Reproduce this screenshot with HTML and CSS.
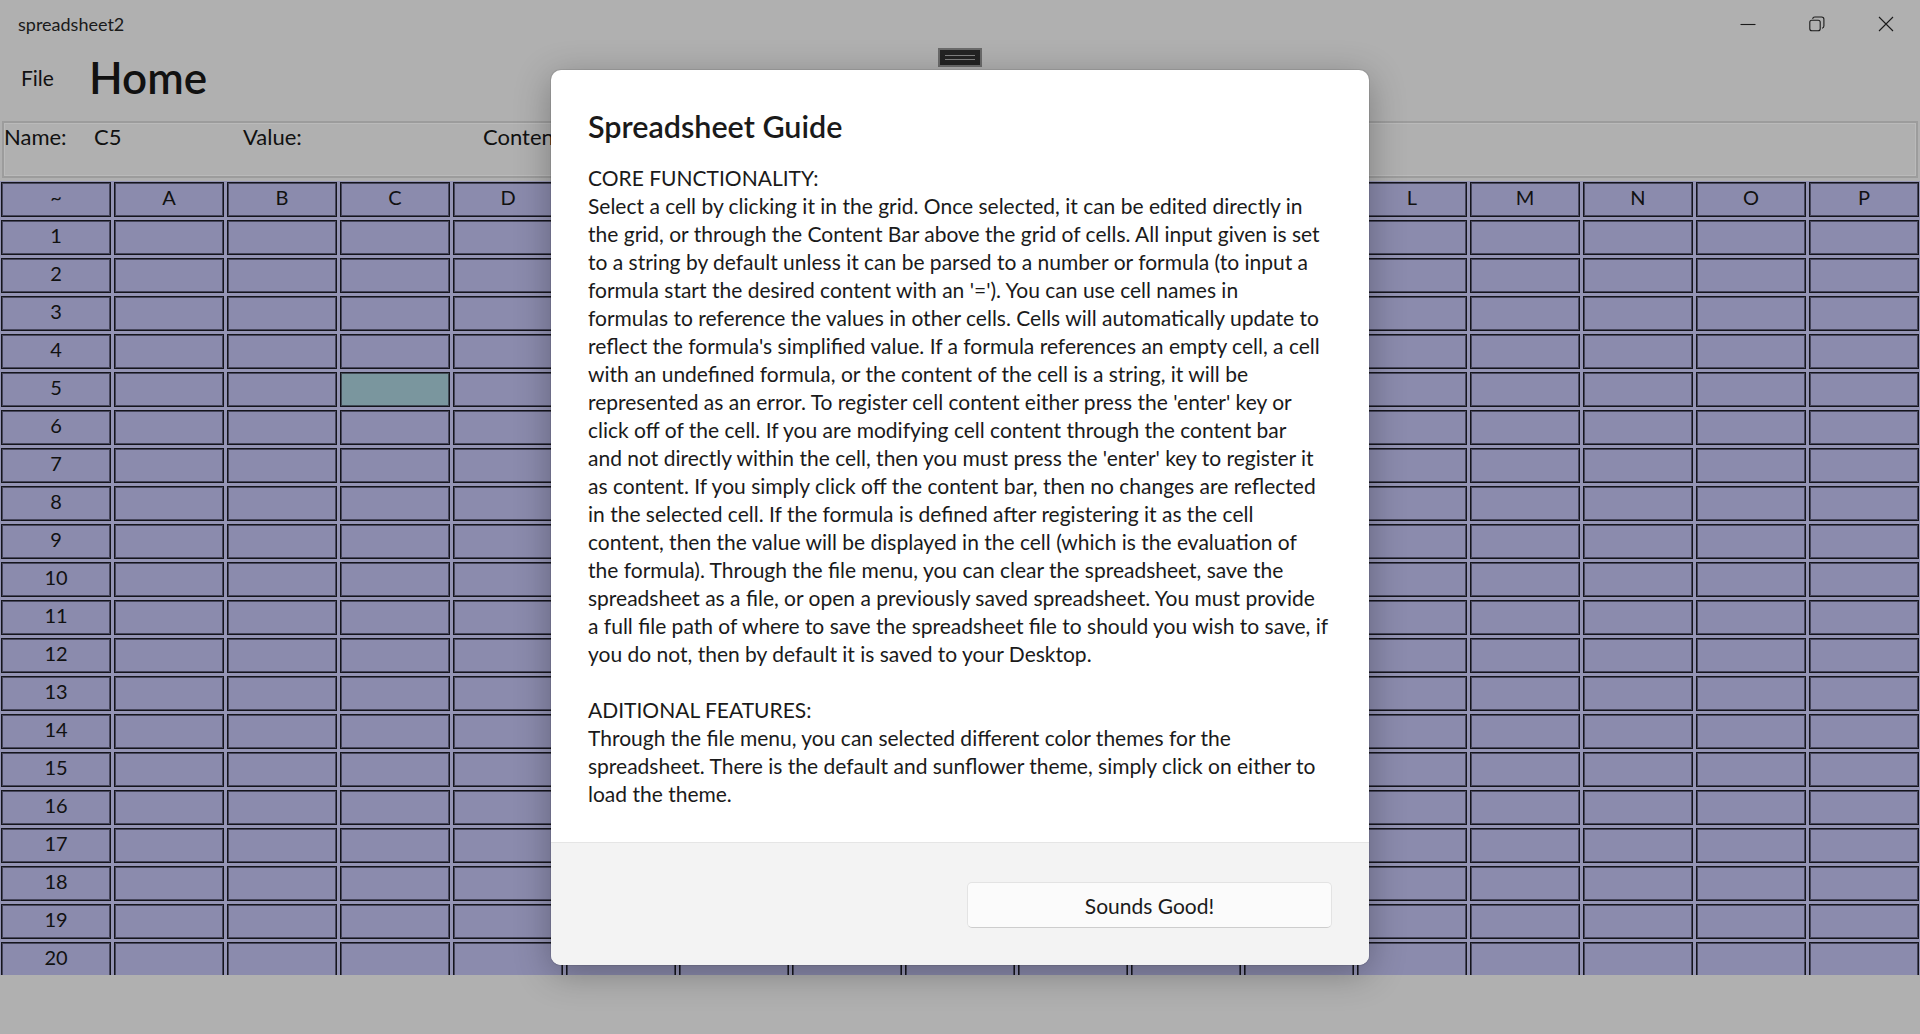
FILE: index.html
```html
<!DOCTYPE html>
<html lang="en">
<head>
<meta charset="utf-8">
<title>spreadsheet2</title>
<link rel="stylesheet" href="styles.css">
</head>
<body>
<header class="titlebar">
  <div class="app-title">spreadsheet2</div>
  <div class="caption">
    <div class="cap-btn"><svg width="16" height="16" viewBox="0 0 16 16"><path d="M0.5 8.5 H15.5" stroke="#1a1a1a" stroke-width="1.1" fill="none"/></svg></div>
    <div class="cap-btn"><svg width="16" height="16" viewBox="0 0 16 16" fill="none" stroke="#1a1a1a" stroke-width="1.1"><rect x="0.8" y="4.3" width="10.4" height="10.4" rx="2"/><path d="M3.6 2.8 A2.3 2.3 0 0 1 5.8 1 H12.6 A2.3 2.3 0 0 1 14.9 3.3 V10 A2.3 2.3 0 0 1 13 12.2"/></svg></div>
    <div class="cap-btn"><svg width="16" height="16" viewBox="0 0 16 16"><path d="M1 1 L15 15 M15 1 L1 15" stroke="#1a1a1a" stroke-width="1.1" fill="none"/></svg></div>
  </div>
</header>
<div class="grip"><span class="grip-lines"></span></div>
<nav class="menubar">
  <span class="menu-file">File</span>
  <h1 class="page-title">Home</h1>
</nav>
<section class="namebar">
  <span class="nb-name">Name:</span>
  <span class="nb-cell">C5</span>
  <span class="nb-value">Value:</span>
  <span class="nb-content">Content:</span>
</section>
<main class="grid">
  <div class="cell">~</div><div class="cell">A</div><div class="cell">B</div><div class="cell">C</div><div class="cell">D</div><div class="cell">E</div><div class="cell">F</div><div class="cell">G</div><div class="cell">H</div><div class="cell">I</div><div class="cell">J</div><div class="cell">K</div><div class="cell">L</div><div class="cell">M</div><div class="cell">N</div><div class="cell">O</div><div class="cell">P</div>
  <div class="cell">1</div><div class="cell"></div><div class="cell"></div><div class="cell"></div><div class="cell"></div><div class="cell"></div><div class="cell"></div><div class="cell"></div><div class="cell"></div><div class="cell"></div><div class="cell"></div><div class="cell"></div><div class="cell"></div><div class="cell"></div><div class="cell"></div><div class="cell"></div><div class="cell"></div>
  <div class="cell">2</div><div class="cell"></div><div class="cell"></div><div class="cell"></div><div class="cell"></div><div class="cell"></div><div class="cell"></div><div class="cell"></div><div class="cell"></div><div class="cell"></div><div class="cell"></div><div class="cell"></div><div class="cell"></div><div class="cell"></div><div class="cell"></div><div class="cell"></div><div class="cell"></div>
  <div class="cell">3</div><div class="cell"></div><div class="cell"></div><div class="cell"></div><div class="cell"></div><div class="cell"></div><div class="cell"></div><div class="cell"></div><div class="cell"></div><div class="cell"></div><div class="cell"></div><div class="cell"></div><div class="cell"></div><div class="cell"></div><div class="cell"></div><div class="cell"></div><div class="cell"></div>
  <div class="cell">4</div><div class="cell"></div><div class="cell"></div><div class="cell"></div><div class="cell"></div><div class="cell"></div><div class="cell"></div><div class="cell"></div><div class="cell"></div><div class="cell"></div><div class="cell"></div><div class="cell"></div><div class="cell"></div><div class="cell"></div><div class="cell"></div><div class="cell"></div><div class="cell"></div>
  <div class="cell">5</div><div class="cell"></div><div class="cell"></div><div class="cell sel"></div><div class="cell"></div><div class="cell"></div><div class="cell"></div><div class="cell"></div><div class="cell"></div><div class="cell"></div><div class="cell"></div><div class="cell"></div><div class="cell"></div><div class="cell"></div><div class="cell"></div><div class="cell"></div><div class="cell"></div>
  <div class="cell">6</div><div class="cell"></div><div class="cell"></div><div class="cell"></div><div class="cell"></div><div class="cell"></div><div class="cell"></div><div class="cell"></div><div class="cell"></div><div class="cell"></div><div class="cell"></div><div class="cell"></div><div class="cell"></div><div class="cell"></div><div class="cell"></div><div class="cell"></div><div class="cell"></div>
  <div class="cell">7</div><div class="cell"></div><div class="cell"></div><div class="cell"></div><div class="cell"></div><div class="cell"></div><div class="cell"></div><div class="cell"></div><div class="cell"></div><div class="cell"></div><div class="cell"></div><div class="cell"></div><div class="cell"></div><div class="cell"></div><div class="cell"></div><div class="cell"></div><div class="cell"></div>
  <div class="cell">8</div><div class="cell"></div><div class="cell"></div><div class="cell"></div><div class="cell"></div><div class="cell"></div><div class="cell"></div><div class="cell"></div><div class="cell"></div><div class="cell"></div><div class="cell"></div><div class="cell"></div><div class="cell"></div><div class="cell"></div><div class="cell"></div><div class="cell"></div><div class="cell"></div>
  <div class="cell">9</div><div class="cell"></div><div class="cell"></div><div class="cell"></div><div class="cell"></div><div class="cell"></div><div class="cell"></div><div class="cell"></div><div class="cell"></div><div class="cell"></div><div class="cell"></div><div class="cell"></div><div class="cell"></div><div class="cell"></div><div class="cell"></div><div class="cell"></div><div class="cell"></div>
  <div class="cell">10</div><div class="cell"></div><div class="cell"></div><div class="cell"></div><div class="cell"></div><div class="cell"></div><div class="cell"></div><div class="cell"></div><div class="cell"></div><div class="cell"></div><div class="cell"></div><div class="cell"></div><div class="cell"></div><div class="cell"></div><div class="cell"></div><div class="cell"></div><div class="cell"></div>
  <div class="cell">11</div><div class="cell"></div><div class="cell"></div><div class="cell"></div><div class="cell"></div><div class="cell"></div><div class="cell"></div><div class="cell"></div><div class="cell"></div><div class="cell"></div><div class="cell"></div><div class="cell"></div><div class="cell"></div><div class="cell"></div><div class="cell"></div><div class="cell"></div><div class="cell"></div>
  <div class="cell">12</div><div class="cell"></div><div class="cell"></div><div class="cell"></div><div class="cell"></div><div class="cell"></div><div class="cell"></div><div class="cell"></div><div class="cell"></div><div class="cell"></div><div class="cell"></div><div class="cell"></div><div class="cell"></div><div class="cell"></div><div class="cell"></div><div class="cell"></div><div class="cell"></div>
  <div class="cell">13</div><div class="cell"></div><div class="cell"></div><div class="cell"></div><div class="cell"></div><div class="cell"></div><div class="cell"></div><div class="cell"></div><div class="cell"></div><div class="cell"></div><div class="cell"></div><div class="cell"></div><div class="cell"></div><div class="cell"></div><div class="cell"></div><div class="cell"></div><div class="cell"></div>
  <div class="cell">14</div><div class="cell"></div><div class="cell"></div><div class="cell"></div><div class="cell"></div><div class="cell"></div><div class="cell"></div><div class="cell"></div><div class="cell"></div><div class="cell"></div><div class="cell"></div><div class="cell"></div><div class="cell"></div><div class="cell"></div><div class="cell"></div><div class="cell"></div><div class="cell"></div>
  <div class="cell">15</div><div class="cell"></div><div class="cell"></div><div class="cell"></div><div class="cell"></div><div class="cell"></div><div class="cell"></div><div class="cell"></div><div class="cell"></div><div class="cell"></div><div class="cell"></div><div class="cell"></div><div class="cell"></div><div class="cell"></div><div class="cell"></div><div class="cell"></div><div class="cell"></div>
  <div class="cell">16</div><div class="cell"></div><div class="cell"></div><div class="cell"></div><div class="cell"></div><div class="cell"></div><div class="cell"></div><div class="cell"></div><div class="cell"></div><div class="cell"></div><div class="cell"></div><div class="cell"></div><div class="cell"></div><div class="cell"></div><div class="cell"></div><div class="cell"></div><div class="cell"></div>
  <div class="cell">17</div><div class="cell"></div><div class="cell"></div><div class="cell"></div><div class="cell"></div><div class="cell"></div><div class="cell"></div><div class="cell"></div><div class="cell"></div><div class="cell"></div><div class="cell"></div><div class="cell"></div><div class="cell"></div><div class="cell"></div><div class="cell"></div><div class="cell"></div><div class="cell"></div>
  <div class="cell">18</div><div class="cell"></div><div class="cell"></div><div class="cell"></div><div class="cell"></div><div class="cell"></div><div class="cell"></div><div class="cell"></div><div class="cell"></div><div class="cell"></div><div class="cell"></div><div class="cell"></div><div class="cell"></div><div class="cell"></div><div class="cell"></div><div class="cell"></div><div class="cell"></div>
  <div class="cell">19</div><div class="cell"></div><div class="cell"></div><div class="cell"></div><div class="cell"></div><div class="cell"></div><div class="cell"></div><div class="cell"></div><div class="cell"></div><div class="cell"></div><div class="cell"></div><div class="cell"></div><div class="cell"></div><div class="cell"></div><div class="cell"></div><div class="cell"></div><div class="cell"></div>
  <div class="cell">20</div><div class="cell"></div><div class="cell"></div><div class="cell"></div><div class="cell"></div><div class="cell"></div><div class="cell"></div><div class="cell"></div><div class="cell"></div><div class="cell"></div><div class="cell"></div><div class="cell"></div><div class="cell"></div><div class="cell"></div><div class="cell"></div><div class="cell"></div><div class="cell"></div>
</main>

<div class="dialog" role="dialog">
  <div class="dlg-body">
    <h2 class="dlg-title">Spreadsheet Guide</h2>
    <p class="dlg-text">CORE FUNCTIONALITY:<br>Select a cell by clicking it in the grid. Once selected, it can be edited directly in<br>the grid, or through the Content Bar above the grid of cells. All input given is set<br>to a string by default unless it can be parsed to a number or formula (to input a<br>formula start the desired content with an '='). You can use cell names in<br>formulas to reference the values in other cells. Cells will automatically update to<br>reflect the formula's simplified value. If a formula references an empty cell, a cell<br>with an undefined formula, or the content of the cell is a string, it will be<br>represented as an error. To register cell content either press the 'enter' key or<br>click off of the cell. If you are modifying cell content through the content bar<br>and not directly within the cell, then you must press the 'enter' key to register it<br>as content. If you simply click off the content bar, then no changes are reflected<br>in the selected cell. If the formula is defined after registering it as the cell<br>content, then the value will be displayed in the cell (which is the evaluation of<br>the formula). Through the file menu, you can clear the spreadsheet, save the<br>spreadsheet as a file, or open a previously saved spreadsheet. You must provide<br>a full file path of where to save the spreadsheet file to should you wish to save, if<br>you do not, then by default it is saved to your Desktop.<br><br>ADITIONAL FEATURES:<br>Through the file menu, you can selected different color themes for the<br>spreadsheet. There is the default and sunflower theme, simply click on either to<br>load the theme.</p>
  </div>
  <div class="dlg-footer">
    <button class="btn">Sounds Good!</button>
  </div>
</div>
</body>
</html>
```
FILE: styles.css
```css
html, body {
  margin: 0;
  padding: 0;
}
body {
  width: 1920px;
  height: 1034px;
  overflow: hidden;
  position: relative;
  background: #b0b0b0;
  font-family: Lato, "Noto Sans", "Liberation Sans", sans-serif;
  color: #111;
}

.titlebar {
  display: flex;
  align-items: center;
  height: 48px;
}
.app-title {
  flex: 1;
  padding-left: 18px;
  font-size: 18px;
  color: #1a1a1a;
}
.caption {
  display: flex;
  align-self: stretch;
}
.cap-btn {
  width: 69px;
  display: flex;
  align-items: center;
  justify-content: center;
  padding-bottom: 1px;
}

.grip {
  position: absolute;
  left: 938px;
  top: 48px;
  width: 44px;
  height: 19px;
  box-sizing: border-box;
  border: 2px solid #6b6b6b;
  background: #232323;
  display: flex;
  align-items: center;
  justify-content: center;
}
.grip-lines {
  width: 30px;
  height: 3px;
  border-top: 1px solid #808080;
  border-bottom: 1px solid #808080;
}

.menubar {
  display: flex;
  align-items: center;
  height: 73px;
  padding-bottom: 15px;
  box-sizing: border-box;
}
.menu-file {
  margin-left: 21px;
  font-size: 21px;
}
.page-title {
  margin: 0 0 0 35px;
  font-size: 44px;
  font-weight: 600;
  line-height: 50px;
}

.namebar {
  margin: 0 2px;
  height: 57px;
  box-sizing: border-box;
  border: 2px solid #9c9c9c;
  box-shadow: inset 0 0 0 1px #bababa;
  display: flex;
  align-items: flex-start;
  padding-top: 1px;
  font-size: 22px;
  line-height: 26px;
}
.nb-name { width: 90px; }
.nb-cell { width: 149px; }
.nb-value { width: 240px; }

.grid {
  margin-top: 3px;
  height: 794px;
  box-sizing: border-box;
  overflow: hidden;
  display: grid;
  grid-template-columns: repeat(17, 1fr);
  grid-auto-rows: 35px;
  gap: 3px;
  padding: 1px;
  background: #9494b4;
}
.cell {
  background: #8b8bad;
  border: 1px solid #15151c;
  box-shadow: inset 0 0 0 1px rgba(25, 25, 38, 0.6);
  display: flex;
  align-items: center;
  justify-content: center;
  padding-bottom: 5px;
  font-size: 20px;
  color: #111;
}
.cell.sel {
  background: #7a969e;
}

.dialog {
  position: absolute;
  left: 551px;
  top: 70px;
  width: 818px;
  height: 895px;
  box-sizing: border-box;
  background: #fff;
  border-radius: 10px;
  overflow: hidden;
  display: flex;
  flex-direction: column;
  box-shadow: 0 8px 36px rgba(0, 0, 0, 0.3), 0 0 0 1px rgba(0, 0, 0, 0.08);
}
.dlg-body {
  flex: 1;
  padding: 38px 37px 0 37px;
}
.dlg-title {
  margin: 0 0 20px;
  font-size: 30.5px;
  font-weight: 600;
  line-height: 36px;
  color: #1a1a1a;
}
.dlg-text {
  margin: 0;
  font-size: 21px;
  line-height: 28px;
  white-space: nowrap;
  color: #1a1a1a;
}
.dlg-footer {
  height: 123px;
  box-sizing: border-box;
  border-top: 1px solid #e5e5e5;
  background: #f3f3f3;
  display: flex;
  justify-content: flex-end;
  align-items: flex-start;
  padding: 39px 37px 0;
}
.btn {
  width: 365px;
  height: 46px;
  box-sizing: border-box;
  border: 1px solid #e3e3e3;
  border-bottom-color: #cdcdcd;
  border-radius: 5px;
  background: #fbfbfb;
  font-family: inherit;
  font-size: 21px;
  color: #1a1a1a;
}
```
